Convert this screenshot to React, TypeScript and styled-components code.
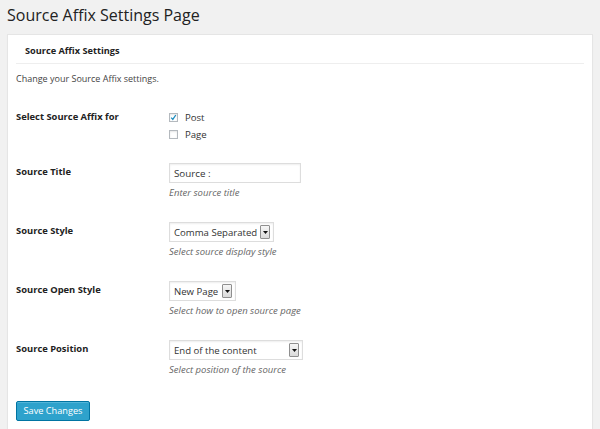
import React from 'react';
import styled, { createGlobalStyle } from 'styled-components';

const GlobalStyle = createGlobalStyle`
  html, body {
    margin: 0;
    padding: 0;
    background: #f1f1f1;
    font-family: "Open Sans", "Liberation Sans", sans-serif;
    color: #444;
  }
`;

const Page = styled.div`
  padding: 4px 7px 0 7px;
  height: 429px;
  box-sizing: border-box;
  overflow: hidden;
`;

const PageTitle = styled.h2`
  margin: 0 0 8px 0;
  font-size: 16px;
  font-weight: 400;
  line-height: 22px;
  color: #222;
`;

const Panel = styled.section`
  background: #fff;
  border: 1px solid #e5e5e5;
  box-shadow: 0 1px 1px rgba(0, 0, 0, 0.04);
  padding: 0 8px 20px 8px;
  min-height: 420px;
`;

const PanelHeader = styled.h3`
  margin: 0;
  padding: 10px 9px 6px 9px;
  font-size: 9.2px;
  font-weight: 700;
  line-height: 12px;
  color: #222;
  border-bottom: 1px solid #eee;
`;

const Intro = styled.p`
  margin: 9px 0 0 0;
  font-size: 9px;
  line-height: 12px;
`;

const FormTable = styled.div`
  display: flex;
  flex-direction: column;
  margin-top: 24px;
`;

const Row = styled.div<{ gap?: number }>`
  display: grid;
  grid-template-columns: 153px 1fr;
  margin-bottom: ${({ gap }) => (gap ?? 23)}px;
`;

const Label = styled.div<{ offset?: number }>`
  font-size: 9.4px;
  font-weight: 700;
  line-height: 12px;
  color: #222;
  padding-top: ${({ offset }) => (offset ?? 3)}px;
`;

const Field = styled.div`
  display: flex;
  flex-direction: column;
  align-items: flex-start;
`;

const CheckLine = styled.label`
  display: flex;
  align-items: center;
  gap: 7px;
  height: 17px;
  font-size: 9.6px;
  color: #333;
`;

const CheckBox = styled.span`
  position: relative;
  width: 9px;
  height: 9px;
  box-sizing: border-box;
  border: 1px solid #b4b9be;
  background: #fff;
  box-shadow: inset 0 1px 2px rgba(0, 0, 0, 0.1);
`;

const TextInput = styled.input`
  width: 132px;
  height: 20px;
  box-sizing: border-box;
  border: 1px solid #ddd;
  box-shadow: inset 0 1px 2px rgba(0, 0, 0, 0.07);
  padding: 0 4px;
  font-family: inherit;
  font-size: 9.8px;
  color: #333;
  outline: none;
`;

const SelectBox = styled.div<{ width: number }>`
  display: flex;
  align-items: center;
  justify-content: space-between;
  width: ${({ width }) => width}px;
  height: 20px;
  box-sizing: border-box;
  border: 1px solid #ddd;
  box-shadow: inset 0 1px 2px rgba(0, 0, 0, 0.07);
  padding: 0 3px 0 4px;
  font-size: 9.6px;
  color: #333;
  background: #fff;
  white-space: nowrap;
`;

const ArrowButton = styled.span`
  display: flex;
  align-items: center;
  justify-content: center;
  width: 10px;
  height: 14px;
  box-sizing: border-box;
  border: 1px solid #8f8f8f;
  border-radius: 1px;
  background: linear-gradient(#f6f6f6, #dadada);
`;

const Description = styled.p`
  margin: 4px 0 0 0;
  font-size: 9.5px;
  font-style: italic;
  line-height: 12px;
  color: #666;
`;

const SubmitButton = styled.button`
  display: block;
  margin-top: 2px;
  width: 74px;
  height: 20px;
  padding: 0;
  border: 1px solid #0074a2;
  border-radius: 2px;
  background: #2ea2cc;
  box-shadow: inset 0 1px 0 rgba(120, 200, 230, 0.5);
  color: #fff;
  font-family: inherit;
  font-size: 9.2px;
  line-height: 18px;
  cursor: pointer;
`;

const Check = ({ checked }: { checked?: boolean }) => (
  <CheckBox>
    {checked && (
      <svg width="9" height="9" viewBox="0 0 9 9" style={{ position: 'absolute', left: -1, top: -1 }}>
        <path d="M2.2 4.6 L3.8 6.4 L6.8 2" fill="none" stroke="#1e8cbe" strokeWidth="1.3" />
      </svg>
    )}
  </CheckBox>
);

const Select = ({ value, width }: { value: string; width: number }) => (
  <SelectBox width={width}>
    <span>{value}</span>
    <ArrowButton>
      <svg width="5" height="3" viewBox="0 0 5 3">
        <path d="M0 0 H5 L2.5 3 Z" fill="#111" />
      </svg>
    </ArrowButton>
  </SelectBox>
);

export default function App() {
  return (
    <>
      <GlobalStyle />
      <Page>
        <PageTitle>Source Affix Settings Page</PageTitle>
        <Panel>
          <PanelHeader>Source Affix Settings</PanelHeader>
          <Intro>Change your Source Affix settings.</Intro>
          <FormTable>
            <Row gap={20}>
              <Label offset={2}>Select Source Affix for</Label>
              <Field>
                <CheckLine>
                  <Check checked />
                  Post
                </CheckLine>
                <CheckLine>
                  <Check />
                  Page
                </CheckLine>
              </Field>
            </Row>
            <Row>
              <Label>Source Title</Label>
              <Field>
                <TextInput defaultValue="Source :" />
                <Description>Enter source title</Description>
              </Field>
            </Row>
            <Row>
              <Label>Source Style</Label>
              <Field>
                <Select value="Comma Separated" width={105} />
                <Description>Select source display style</Description>
              </Field>
            </Row>
            <Row>
              <Label>Source Open Style</Label>
              <Field>
                <Select value="New Page" width={67} />
                <Description>Select how to open source page</Description>
              </Field>
            </Row>
            <Row>
              <Label>Source Position</Label>
              <Field>
                <Select value="End of the content" width={134} />
                <Description>Select position of the source</Description>
              </Field>
            </Row>
          </FormTable>
          <SubmitButton>Save Changes</SubmitButton>
        </Panel>
      </Page>
    </>
  );
}
